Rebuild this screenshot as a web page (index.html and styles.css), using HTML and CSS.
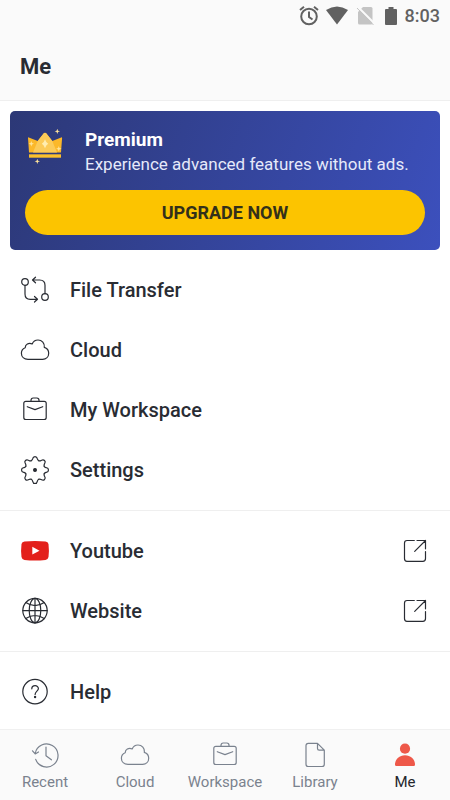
FILE: index.html
```html
<!DOCTYPE html>
<html lang="en">
<head>
<meta charset="utf-8">
<meta name="viewport" content="width=device-width, initial-scale=1">
<title>Me</title>
<link rel="stylesheet" href="styles.css">
</head>
<body>
<svg class="sprite" aria-hidden="true">
  <symbol id="cloud" viewBox="0 0 30 30"><path d="M8 24.3C4 24.3 1.4 21.8 1.4 18.3C1.4 15.6 2.8 13.7 5.2 12.8C5.2 9.5 8.6 7.4 12.2 9C13.2 6.4 15.4 5 18 5C22 5 24.8 8.2 24.3 12.4C27.1 13.2 28.7 15.5 28.7 18.3C28.7 21.8 26.1 24.3 22.6 24.3Z"/></symbol>
  <symbol id="case" viewBox="0 0 30 30"><rect x="3.8" y="6.3" width="22.4" height="18.2" rx="2"/><path d="M11 6.3V5.2Q11 3 13.2 3H16.8Q19 3 19 5.2V6.3M7.3 11.7L15 14.6L22.7 11.7"/></symbol>
  <symbol id="external" viewBox="0 0 30 30"><path d="M14.3 4.5H7Q4.5 4.5 4.5 7V22.5Q4.5 25.3 7 25.3H22.8Q25.5 25.3 25.5 22.5V15.5M17 4.5H25.5V12.8M25.5 4.5L14.7 15.3"/></symbol>
  <symbol id="tooth" viewBox="0 0 30 30"><path d="M11.2 5.8C12.5 5.2 12.5 4.5 12.7 3.7C13.2 .8 16.8 .8 17.3 3.7C17.5 4.5 17.5 5.2 18.8 5.8"/></symbol>
</svg>

<div class="status">
  <svg class="status-icon" viewBox="0 0 24 24"><g class="alarm"><circle cx="12" cy="12.5" r="7.8"/><path d="M12 7.5V13L15.5 15.5M3 6L7 2.8M21 6L17 2.8"/></g></svg>
  <svg class="status-icon" viewBox="0 0 24 24"><path d="M1 6Q12-1 23 6L12 20.5Z"/></svg>
  <svg class="status-icon faint" viewBox="0 0 24 24"><path d="M10 3H18Q19.5 3 19.5 4.5V19Q19.5 20.5 18 20.5H6.5Q5 20.5 5 19V8Z"/><path class="slash-gap" d="M5.5 3.5L22 20"/><path class="slash" d="M4 4L20.5 21"/></svg>
  <svg class="status-icon narrow" viewBox="2 0 20 24"><path d="M9.5 3H14.5V5H17Q18 5 18 6V20Q18 21 17 21H7Q6 21 6 20V6Q6 5 7 5H9.5Z"/></svg>
  <span class="time">8:03</span>
</div>

<header class="header"><h1>Me</h1></header>

<main class="content">
  <section class="premium">
    <div class="intro">
      <svg class="crown" viewBox="0 1 40 40" aria-hidden="true">
        <path fill="#fbb829" d="M3 12.8Q3 12 3.8 12.5L12.7 16L18.8 8.3Q20 7 21.2 8.3L27.3 16L36.2 12.5Q37.2 12 37.1 13L36 27.5H4Z"/>
        <path fill="#fccb58" d="M12.7 16L18.8 8.3Q20 7 21.2 8.3L27.3 16L32 27.5H8Z"/>
        <path fill="#fbc02d" d="M4 29.3H36V32.7H4Z"/>
        <path fill="#ffedb0" d="M20 14.3Q21 17.8 23.2 18.7Q21 19.8 20 23.3Q19 19.8 16.8 18.7Q19 17.8 20 14.3Z"/>
        <path fill="#ffe49a" d="M6.3 16L7 18L9 18.7L7 19.4L6.3 21.5L5.6 19.4L3.6 18.7L5.6 18ZM33.8 21L34.5 23L36.5 23.7L34.5 24.4L33.8 26.5L33.1 24.4L31.1 23.7L33.1 23ZM32.3 3.8L33 5.7L35 6.3L33 7L32.3 9L31.6 7L29.6 6.3L31.6 5.7ZM12.3 33.8L13 35.7L15 36.3L13 37L12.3 39L11.6 37L9.6 36.3L11.6 35.7Z"/>
      </svg>
      <div class="pitch">
        <h2>Premium</h2>
        <p>Experience advanced features without ads.</p>
      </div>
    </div>
    <button class="upgrade" type="button">UPGRADE NOW</button>
  </section>

  <nav class="group" aria-label="Account">
    <a class="row" href="#transfer">
      <svg class="icon" viewBox="0 0 30 30"><circle cx="5" cy="7" r="3.3"/><circle cx="25" cy="22" r="3.3"/><path d="M5 10.3V19Q5 24.3 10.3 24.3H17.3M14.5 21.5L17.5 24.3L14.5 27M25 18.7V10.3Q25 5 19.7 5H12.7M15.5 2.2L12.5 5L15.5 7.8"/></svg>
      <span>File Transfer</span>
    </a>
    <a class="row" href="#cloud-files"><svg class="icon"><use href="#cloud"/></svg><span>Cloud</span></a>
    <a class="row" href="#workspace"><svg class="icon"><use href="#case"/></svg><span>My Workspace</span></a>
    <a class="row" href="#settings">
      <svg class="icon" viewBox="0 0 30 30">
        <use href="#tooth"/><use href="#tooth" transform="rotate(45 15 15)"/><use href="#tooth" transform="rotate(90 15 15)"/><use href="#tooth" transform="rotate(135 15 15)"/><use href="#tooth" transform="rotate(180 15 15)"/><use href="#tooth" transform="rotate(225 15 15)"/><use href="#tooth" transform="rotate(270 15 15)"/><use href="#tooth" transform="rotate(315 15 15)"/>
        <circle class="solid" cx="15" cy="15" r="1.4"/>
      </svg>
      <span>Settings</span>
    </a>
  </nav>

  <nav class="group" aria-label="Links">
    <a class="row" href="#youtube">
      <svg class="icon" viewBox="0 0 30 30"><path class="tube" d="M4.5 5.6Q15 4.6 25.5 5.6Q28 5.8 28.5 8Q29.3 14.5 28.5 21Q28 23.6 25.5 23.9Q15 24.9 4.5 23.9Q2 23.6 1.5 21Q.7 14.5 1.5 8Q2 5.8 4.5 5.6Z"/><path class="play" d="M12.3 10.8L19.5 14.7L12.3 18.6Z"/></svg>
      <span>Youtube</span>
      <svg class="icon end"><use href="#external"/></svg>
    </a>
    <a class="row" href="#website">
      <svg class="icon" viewBox="0 0 30 30"><circle cx="15" cy="14.6" r="12.2"/><ellipse cx="15" cy="14.6" rx="5.8" ry="12.2"/><path d="M15 2.4V26.8M2.8 14.6H27.2M5.8 6.6Q15 12.8 24.2 6.6M5.8 22.6Q15 16.4 24.2 22.6"/></svg>
      <span>Website</span>
      <svg class="icon end"><use href="#external"/></svg>
    </a>
  </nav>

  <nav class="group" aria-label="Support">
    <a class="row" href="#help">
      <svg class="icon" viewBox="0 0 30 30"><circle cx="15" cy="14.6" r="12.2"/><path d="M11.8 11.8C11.8 7.7 18.4 7.7 18.4 11.6C18.4 14 15.1 14.3 15.1 17.5"/><circle class="solid" cx="15.1" cy="20" r=".6"/></svg>
      <span>Help</span>
    </a>
  </nav>
</main>

<nav class="tabs" aria-label="Main">
  <a class="tab" href="#recent"><svg class="icon" viewBox="0 0 30 30"><path d="M5.2 13.5A11.5 11.5 0 1 1 5.7 19.4M2.5 10.8L5.2 13.9L8.5 12M16 7V15.7L21.4 19.8"/></svg><span>Recent</span></a>
  <a class="tab" href="#cloud-tab"><svg class="icon"><use href="#cloud"/></svg><span>Cloud</span></a>
  <a class="tab" href="#workspace-tab"><svg class="icon"><use href="#case"/></svg><span>Workspace</span></a>
  <a class="tab" href="#library"><svg class="icon" viewBox="0 0 30 30"><path d="M17.5 3.3H8.3Q6 3.3 6 5.6V24.2Q6 26.5 8.3 26.5H22Q24.3 26.5 24.3 24.2V10.2ZM17.5 3.3V8.5Q17.5 10.2 19.2 10.2H24.3"/></svg><span>Library</span></a>
  <a class="tab active" href="#me" aria-current="page"><svg class="icon" viewBox="0 0 30 30"><circle class="person" cx="15" cy="8.7" r="5.1"/><path class="person" d="M5 24.5C5 19.2 9.4 15.3 15 15.3S25 19.2 25 24.5Q25 26 23.8 26H6.2Q5 26 5 24.5Z"/></svg><span>Me</span></a>
</nav>
</body>
</html>
```
FILE: styles.css
```css
* {
  box-sizing: border-box;
}

body {
  display: flex;
  flex-direction: column;
  min-height: 100vh;
  margin: 0;
  background: #fff;
  color: #292c33;
  font-family: Roboto, "Liberation Sans", sans-serif;
}

h1, h2, p {
  margin: 0;
}

a {
  color: inherit;
  text-decoration: none;
}

.sprite {
  position: absolute;
  width: 0;
  height: 0;
}

.status {
  display: flex;
  align-items: center;
  justify-content: flex-end;
  gap: 4px;
  height: 32px;
  padding: 0 10px;
  background: #fafafa;
  color: #616161;
}

.status-icon {
  width: 24px;
  height: 24px;
  fill: currentColor;
}

.narrow {
  width: 20px;
}

.alarm {
  fill: none;
  stroke: currentColor;
  stroke-width: 2;
}

.faint {
  color: #c4c4c4;
}

.slash,
.slash-gap {
  fill: none;
  stroke: currentColor;
  stroke-width: 1;
}

.slash-gap {
  stroke: #fafafa;
  stroke-width: 2;
}

.time {
  font-size: 18px;
  font-weight: 500;
  line-height: 32px;
}

.header {
  padding: 19px 20px 17px;
  border-bottom: 1px solid #efefef;
  background: #fafafa;
}

.header h1 {
  font-size: 22px;
  font-weight: 700;
  line-height: 32px;
}

.content {
  flex: 1;
}

.premium {
  margin: 10px 10px 0;
  padding: 15px;
  border-radius: 5px;
  background: linear-gradient(110deg, #2c3876, #3c50bd);
  color: #fff;
}

.intro {
  display: flex;
  gap: 20px;
}

.crown {
  flex: none;
  width: 40px;
  height: 40px;
}

.pitch {
  padding: 2px 0 14px;
  line-height: 24px;
}

.pitch h2 {
  font-size: 19px;
  font-weight: 700;
}

.pitch p {
  color: #e6e9fa;
  font-size: 17px;
}

.upgrade {
  display: block;
  width: 100%;
  height: 45px;
  border: 0;
  border-radius: 23px;
  background: #fcc400;
  color: #33301a;
  font: 700 18px/24px Roboto, "Liberation Sans", sans-serif;
}

.group {
  padding: 10px 0;
}

.group + .group {
  border-top: 1px solid #efefef;
}

.group:last-child {
  padding-bottom: 0;
}

.row {
  display: flex;
  align-items: center;
  gap: 20px;
  height: 60px;
  padding: 0 20px;
  font-size: 20px;
  font-weight: 500;
}

.icon {
  flex: none;
  width: 30px;
  height: 30px;
  fill: none;
  stroke: currentColor;
  stroke-width: 1.2;
  stroke-linecap: round;
  stroke-linejoin: round;
}

.end {
  margin-left: auto;
}

.solid {
  fill: currentColor;
}

.tube {
  fill: #e3201b;
  stroke: none;
}

.play {
  fill: #fff;
  stroke: none;
}

.tabs {
  position: sticky;
  bottom: 0;
  display: grid;
  grid-template-columns: repeat(5, 1fr);
  padding: 10px 0 8px;
  border-top: 1px solid #f0f0f0;
  background: #fafafa;
  color: #7a828e;
}

.tab {
  display: flex;
  flex-direction: column;
  align-items: center;
  gap: 2px;
  font-size: 15px;
  line-height: 20px;
}

.active {
  color: #24262b;
}

.person {
  fill: #ee5849;
  stroke: none;
}
```
